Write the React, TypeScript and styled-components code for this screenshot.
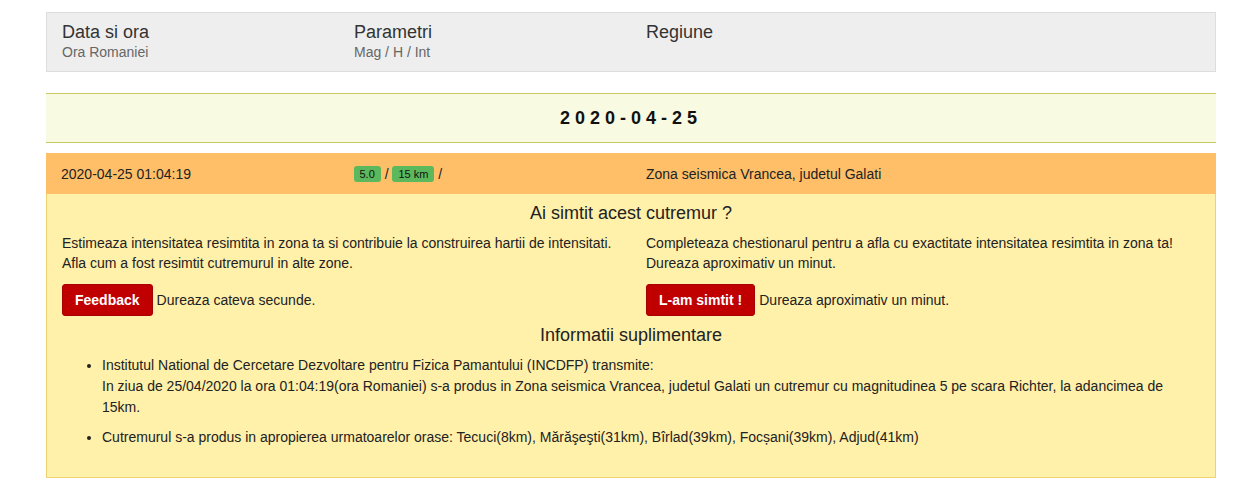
import React from 'react';
import styled, { createGlobalStyle } from 'styled-components';

const GlobalStyle = createGlobalStyle`
	body {
		margin: 0;
		background: #fff;
		font-family: "Liberation Sans", Arial, sans-serif;
		font-size: 14px;
		line-height: 20px;
		color: #333;
	}
`;

export default function App() {
	return (
		<>
			<GlobalStyle />
			<Container>
				<HeaderBar>
					<HeadCol>
						<h3>Data si ora</h3>
						<small>Ora Romaniei</small>
					</HeadCol>
					<HeadCol>
						<h3>Parametri</h3>
						<small>Mag / H / Int</small>
					</HeadCol>
					<HeadCol>
						<h3>Regiune</h3>
					</HeadCol>
				</HeaderBar>

				<DateBar>2020-04-25</DateBar>

				<QuakeRow>
					<span>2020-04-25 01:04:19</span>
					<span>
						<Badge>5.0</Badge> / <Badge>15 km</Badge> /
					</span>
					<Region>Zona seismica Vrancea, judetul Galati</Region>
				</QuakeRow>

				<Panel>
					<PanelTitle>Ai simtit acest cutremur ?</PanelTitle>
					<TwoCols>
						<div>
							<p>
								Estimeaza intensitatea resimtita in zona ta si contribuie la construirea hartii de intensitati.
								<br />
								Afla cum a fost resimtit cutremurul in alte zone.
							</p>
							<Action>
								<RedButton>Feedback</RedButton> Dureaza cateva secunde.
							</Action>
						</div>
						<div>
							<p>
								Completeaza chestionarul pentru a afla cu exactitate intensitatea resimtita in zona ta!
								<br />
								Dureaza aproximativ un minut.
							</p>
							<Action>
								<RedButton>L-am simtit !</RedButton> Dureaza aproximativ un minut.
							</Action>
						</div>
					</TwoCols>
					<PanelTitle>Informatii suplimentare</PanelTitle>
					<InfoList>
						<li>
							Institutul National de Cercetare Dezvoltare pentru Fizica Pamantului (INCDFP) transmite:
							<br />
							In ziua de 25/04/2020 la ora 01:04:19(ora Romaniei) s-a produs in Zona seismica Vrancea, judetul Galati un cutremur cu magnitudinea 5 pe scara Richter, la adancimea de 15km.
						</li>
						<li>
							Cutremurul s-a produs in apropierea urmatoarelor orase: Tecuci(8km), Mărăşeşti(31km), Bîrlad(39km), Focșani(39km), Adjud(41km)
						</li>
					</InfoList>
				</Panel>
			</Container>
		</>
	);
}

const Container = styled.div`
	width: 1170px;
	margin: 12px 0 0 46px;
`;

const HeaderBar = styled.div`
	display: grid;
	grid-template-columns: repeat(4, 1fr);
	height: 60px;
	box-sizing: border-box;
	padding-top: 9px;
	background: #eeeeee;
	border: 1px solid #dddddd;
`;

const HeadCol = styled.div`
	padding: 0 15px;
	h3 {
		margin: 0;
		font-size: 18px;
		font-weight: 400;
		line-height: 21px;
		color: #333;
	}
	small {
		display: block;
		font-size: 14px;
		line-height: 18px;
		color: #666;
	}
`;

const DateBar = styled.div`
	margin-top: 21px;
	height: 48px;
	line-height: 48px;
	text-align: center;
	background: #f8fae2;
	border-top: 1px solid #c5c95e;
	border-bottom: 1px solid #c5c95e;
	font-size: 18px;
	font-weight: 700;
	letter-spacing: 5px;
	color: #111;
`;

const QuakeRow = styled.div`
	margin-top: 10px;
	display: grid;
	grid-template-columns: repeat(4, 1fr);
	height: 41px;
	align-items: center;
	background: #ffbf69;
	font-size: 14px;
	color: #222;
	& > span {
		padding: 0 15px;
		white-space: nowrap;
	}
`;

const Region = styled.span`
	grid-column: span 2;
`;

const Badge = styled.span`
	display: inline-block;
	padding: 2px 6px;
	font-size: 11px;
	line-height: 12px;
	border-radius: 3px;
	background: #5cb85c;
	color: #111;
	vertical-align: 1px;
`;

const Panel = styled.div`
	background: #fff0aa;
	border: 1px solid #eed271;
	border-top: none;
	padding: 9px 0 29px;
`;

const PanelTitle = styled.h4`
	margin: 0 0 10px;
	font-size: 18px;
	font-weight: 400;
	line-height: 20px;
	text-align: center;
	color: #222;
`;

const TwoCols = styled.div`
	display: grid;
	grid-template-columns: 1fr 1fr;
	margin-bottom: 9px;
	& > div {
		padding: 0 15px;
	}
	p {
		margin: 0 0 11px;
		color: #222;
	}
`;

const Action = styled.div`
	display: flex;
	align-items: center;
	gap: 4px;
	color: #222;
`;

const RedButton = styled.button`
	height: 32px;
	padding: 0 12px;
	border: 1px solid #a80000;
	border-radius: 3px;
	background: #c00000;
	color: #fff;
	font-family: "Liberation Sans", Arial, sans-serif;
	font-size: 14px;
	font-weight: 700;
	cursor: pointer;
`;

const InfoList = styled.ul`
	margin: 9px 0 0 15px;
	padding: 0 40px 0 40px;
	line-height: 21px;
	color: #222;
	li {
		margin-bottom: 9px;
	}
	li:last-child {
		margin-bottom: 0;
	}
`;
